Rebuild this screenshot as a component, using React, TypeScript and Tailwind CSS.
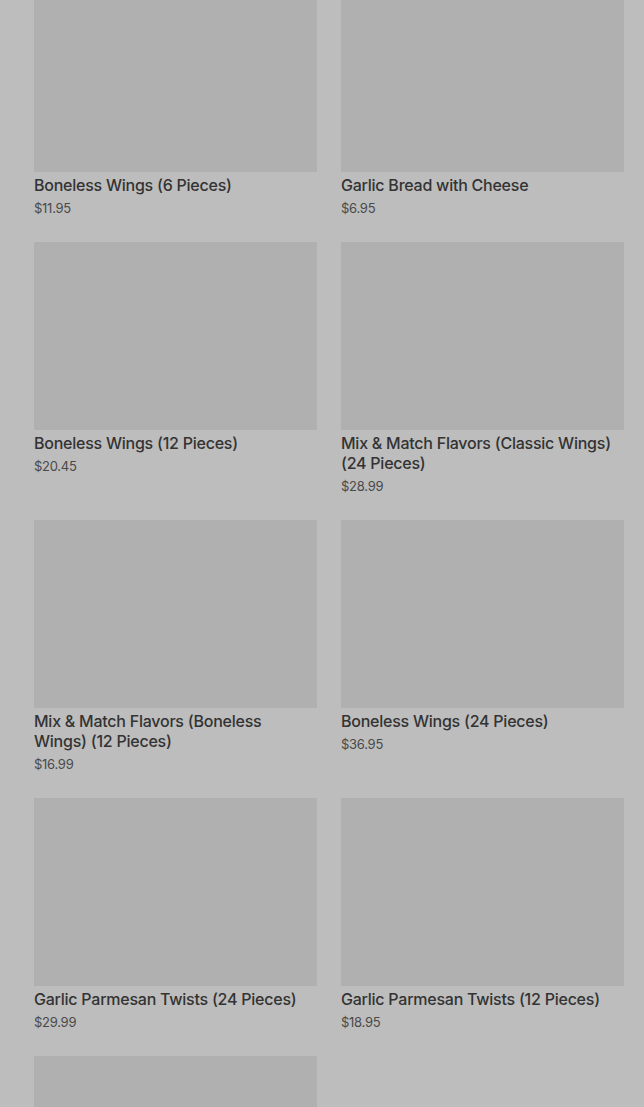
const ITEMS = [
  { name: 'Boneless Wings (6 Pieces)', price: '$11.95' },
  { name: 'Garlic Bread with Cheese', price: '$6.95' },
  { name: 'Boneless Wings (12 Pieces)', price: '$20.45' },
  { name: 'Mix & Match Flavors (Classic Wings) (24 Pieces)', price: '$28.99' },
  { name: 'Mix & Match Flavors (Boneless Wings) (12 Pieces)', price: '$16.99' },
  { name: 'Boneless Wings (24 Pieces)', price: '$36.95' },
  { name: 'Garlic Parmesan Twists (24 Pieces)', price: '$29.99' },
  { name: 'Garlic Parmesan Twists (12 Pieces)', price: '$18.95' },
  { name: '', price: '' },
]

export default function App() {
  return (
    <div className="h-[1107px] overflow-hidden bg-[#bdbdbd] pl-[34px] pr-[20px] font-['Inter',sans-serif]">
      <div className="-mt-[16px] grid grid-cols-2 gap-x-6">
        {ITEMS.map((item, i) => (
          <div key={i} className="pb-6">
            <div className="h-[188px] bg-[#b0b0b0]" />
            <div className="pt-[3px] text-[16px] font-medium leading-5 tracking-[-0.015em] text-[#333333]">{item.name}</div>
            <div className="pt-[3px] text-[13px] leading-5 tracking-[-0.02em] text-[#4a4a4a]">{item.price}</div>
          </div>
        ))}
      </div>
    </div>
  )
}
